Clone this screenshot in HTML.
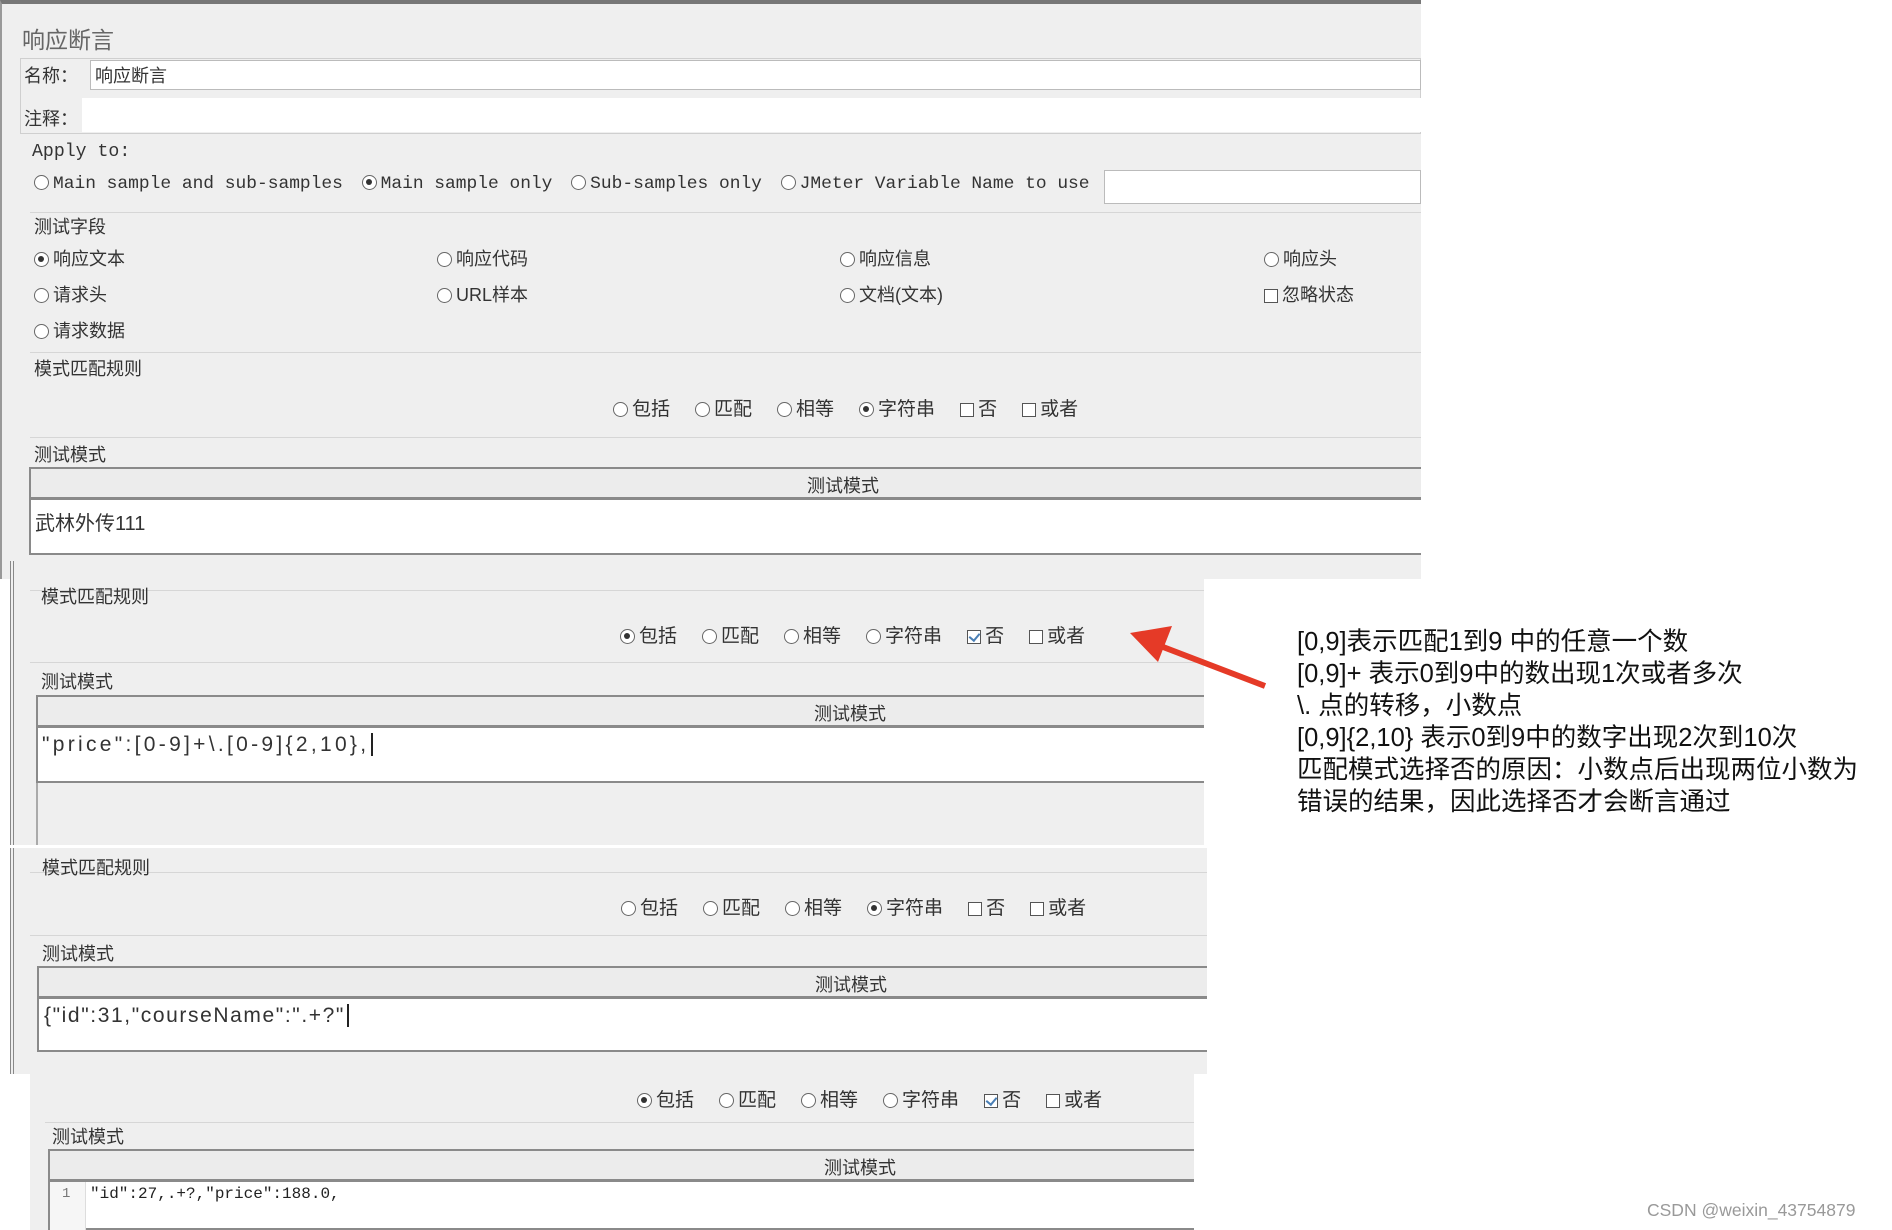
<!DOCTYPE html>
<html><head><meta charset="utf-8"><style>
*{margin:0;padding:0;box-sizing:border-box}
body{width:1892px;height:1230px;background:#fff;position:relative;overflow:hidden;font-family:"Liberation Sans","Noto Sans CJK SC",sans-serif;color:#222}
.a{position:absolute;white-space:nowrap}
.p{position:absolute;background:#efefef}
.cn{font-size:18px;font-family:"Liberation Sans","Noto Sans CJK SC",sans-serif;color:#333}
.mono{font-family:"Liberation Mono","Noto Sans CJK SC",monospace;font-size:18.2px;color:#333}
.r{display:inline-block;width:15px;height:15px;border:1.5px solid #666;border-radius:50%;background:#fff;vertical-align:-2px;margin-right:4px;position:relative}
.r.on::after{content:"";position:absolute;left:3px;top:3px;width:6px;height:6px;border-radius:50%;background:#333}
.c{display:inline-block;width:14px;height:14px;border:1.5px solid #555;background:#fff;vertical-align:-2px;margin-right:4px;position:relative}
.c.on::after{content:"";position:absolute;left:3px;top:0px;width:5px;height:8px;border:solid #4a7fb5;border-width:0 2px 2px 0;transform:rotate(40deg)}
.rad{font-size:19px}
.rad span.it{margin-right:25px}
.ln{position:absolute;height:1px;background:#d6d6d6}
.hdr{position:absolute;background:#ececec;border:2px solid #8a8a8a;border-bottom-width:3px;font-size:18px;color:#333}
.hdr span{position:absolute;top:3px}
.fld{position:absolute;background:#fff;border:2px solid #8a8a8a;border-top:none}
.note{font-size:25.5px;color:#111;line-height:32px}
</style></head><body>

<div class="p" style="left:0;top:0;width:1421px;height:579px;border-top:4px solid #777;border-left:2px solid #999"></div>
<div class="a cn" style="left:22px;top:21px;font-size:23px;color:#666">响应断言</div>
<div class="a" style="left:20px;top:58px;width:1401px;height:76px;border:1px solid #cfcfcf"></div>
<div class="a cn" style="left:24px;top:62px">名称：</div>
<div class="a" style="left:90px;top:60px;width:1331px;height:30px;background:#fff;border:1px solid #bbb"></div>
<div class="a cn" style="left:95px;top:62px">响应断言</div>
<div class="a cn" style="left:24px;top:105px">注释：</div>
<div class="a" style="left:82px;top:98px;width:1339px;height:34px;background:#fff"></div>
<div class="a mono" style="left:32px;top:142px">Apply to:</div>
<div class="a mono" style="left:34px;top:174px;font-size:17.9px"><span class="r"></span>Main sample and sub-samples <span class="r on" style="margin-left:8px"></span>Main sample only <span class="r" style="margin-left:8px"></span>Sub-samples only <span class="r" style="margin-left:8px"></span>JMeter Variable Name to use</div>
<div class="a" style="left:1104px;top:170px;width:317px;height:34px;background:#fff;border:1px solid #bbb"></div>
<div class="ln" style="left:30px;top:212px;width:1391px"></div>
<div class="a cn" style="left:34px;top:213px">测试字段</div>
<div class="a cn" style="left:34px;top:245px"><span class="r on"></span>响应文本</div>
<div class="a cn" style="left:437px;top:245px"><span class="r"></span>响应代码</div>
<div class="a cn" style="left:840px;top:245px"><span class="r"></span>响应信息</div>
<div class="a cn" style="left:1264px;top:245px"><span class="r"></span>响应头</div>
<div class="a cn" style="left:34px;top:281px"><span class="r"></span>请求头</div>
<div class="a cn" style="left:437px;top:281px"><span class="r"></span>URL样本</div>
<div class="a cn" style="left:840px;top:281px"><span class="r"></span>文档(文本)</div>
<div class="a cn" style="left:1264px;top:281px"><span class="c"></span>忽略状态</div>
<div class="a cn" style="left:34px;top:317px"><span class="r"></span>请求数据</div>
<div class="ln" style="left:30px;top:352px;width:1391px"></div>
<div class="a cn" style="left:34px;top:355px">模式匹配规则</div>
<div class="a cn rad" style="left:613px;top:394px"><span class="r"></span><span class="it">包括</span><span class="r"></span><span class="it">匹配</span><span class="r"></span><span class="it">相等</span><span class="r on"></span><span class="it">字符串</span><span class="c"></span><span class="it">否</span><span class="c"></span>或者</div>
<div class="ln" style="left:30px;top:437px;width:1391px"></div>
<div class="a cn" style="left:34px;top:441px">测试模式</div>
<div class="hdr" style="left:29px;top:467px;width:1392px;height:33px;border-right:none"><span style="left:776px">测试模式</span></div>
<div class="fld" style="left:29px;top:500px;width:1392px;height:55px;border-right:none"></div>
<div class="a cn" style="left:35px;top:507px;font-size:20px">武林外传111</div>

<div class="p" style="left:10px;top:561px;width:1194px;height:284px;border-left:4px double #888"></div>
<div class="ln" style="left:30px;top:590px;width:1174px"></div>
<div class="a cn" style="left:41px;top:583px">模式匹配规则</div>
<div class="a cn rad" style="left:620px;top:621px"><span class="r on"></span><span class="it">包括</span><span class="r"></span><span class="it">匹配</span><span class="r"></span><span class="it">相等</span><span class="r"></span><span class="it">字符串</span><span class="c on"></span><span class="it">否</span><span class="c"></span>或者</div>
<div class="ln" style="left:30px;top:662px;width:1174px"></div>
<div class="a cn" style="left:41px;top:668px">测试模式</div>
<div class="hdr" style="left:36px;top:695px;width:1168px;height:33px;border-right:none"><span style="left:776px">测试模式</span></div>
<div class="fld" style="left:36px;top:728px;width:1168px;height:55px;border-right:none"></div>
<div class="a cn" style="left:42px;top:733px;font-size:21px;letter-spacing:3.3px">"price":[0-9]+\.[0-9]{2,10},<span style="border-left:2px solid #222;margin-left:2px"></span></div>
<div class="a" style="left:36px;top:783px;width:2px;height:62px;background:#aaa"></div>

<div class="p" style="left:10px;top:848px;width:1197px;height:226px;border-left:4px double #888"></div>
<div class="ln" style="left:30px;top:872px;width:1177px"></div>
<div class="a cn" style="left:42px;top:854px">模式匹配规则</div>
<div class="a cn rad" style="left:621px;top:893px"><span class="r"></span><span class="it">包括</span><span class="r"></span><span class="it">匹配</span><span class="r"></span><span class="it">相等</span><span class="r on"></span><span class="it">字符串</span><span class="c"></span><span class="it">否</span><span class="c"></span>或者</div>
<div class="ln" style="left:30px;top:935px;width:1177px"></div>
<div class="a cn" style="left:42px;top:940px">测试模式</div>
<div class="hdr" style="left:37px;top:966px;width:1170px;height:33px;border-right:none"><span style="left:776px">测试模式</span></div>
<div class="fld" style="left:37px;top:999px;width:1170px;height:53px;border-right:none"></div>
<div class="a cn" style="left:44px;top:1004px;font-size:21px;letter-spacing:1.6px">{"id":31,"courseName":".+?"<span style="border-left:2px solid #222;margin-left:2px"></span></div>

<div class="p" style="left:30px;top:1074px;width:1164px;height:156px"></div>
<div class="a cn rad" style="left:637px;top:1085px"><span class="r on"></span><span class="it">包括</span><span class="r"></span><span class="it">匹配</span><span class="r"></span><span class="it">相等</span><span class="r"></span><span class="it">字符串</span><span class="c on"></span><span class="it">否</span><span class="c"></span>或者</div>
<div class="ln" style="left:45px;top:1122px;width:1149px"></div>
<div class="a cn" style="left:52px;top:1123px">测试模式</div>
<div class="hdr" style="left:48px;top:1149px;width:1146px;height:33px;border-right:none"><span style="left:774px">测试模式</span></div>
<div class="fld" style="left:48px;top:1182px;width:1146px;height:48px;border-right:none"></div>
<div class="a" style="left:50px;top:1182px;width:36px;height:48px;background:#f6f6f6;border-right:1px solid #ddd"></div>
<div class="a mono" style="left:62px;top:1186px;font-size:14px;color:#777">1</div>
<div class="a mono" style="left:90px;top:1185px;font-size:16px;color:#222">"id":27,.+?,"price":188.0,</div>

<svg class="a" style="left:1120px;top:620px" width="160" height="80" viewBox="0 0 160 80">
<line x1="145" y1="66" x2="30" y2="22" stroke="#e53a27" stroke-width="6"/>
<polygon points="10,13 52,6 38,42" fill="#e53a27"/>
</svg>

<div class="a note" style="left:1297px;top:626px">[0,9]表示匹配1到9 中的任意一个数<br>[0,9]+ 表示0到9中的数出现1次或者多次<br>\. 点的转移，小数点<br>[0,9]{2,10} 表示0到9中的数字出现2次到10次<br>匹配模式选择否的原因：小数点后出现两位小数为<br>错误的结果，因此选择否才会断言通过</div>

<div class="a" style="left:1647px;top:1200px;font-size:17.5px;color:#999">CSDN @weixin_43754879</div>
</body></html>
